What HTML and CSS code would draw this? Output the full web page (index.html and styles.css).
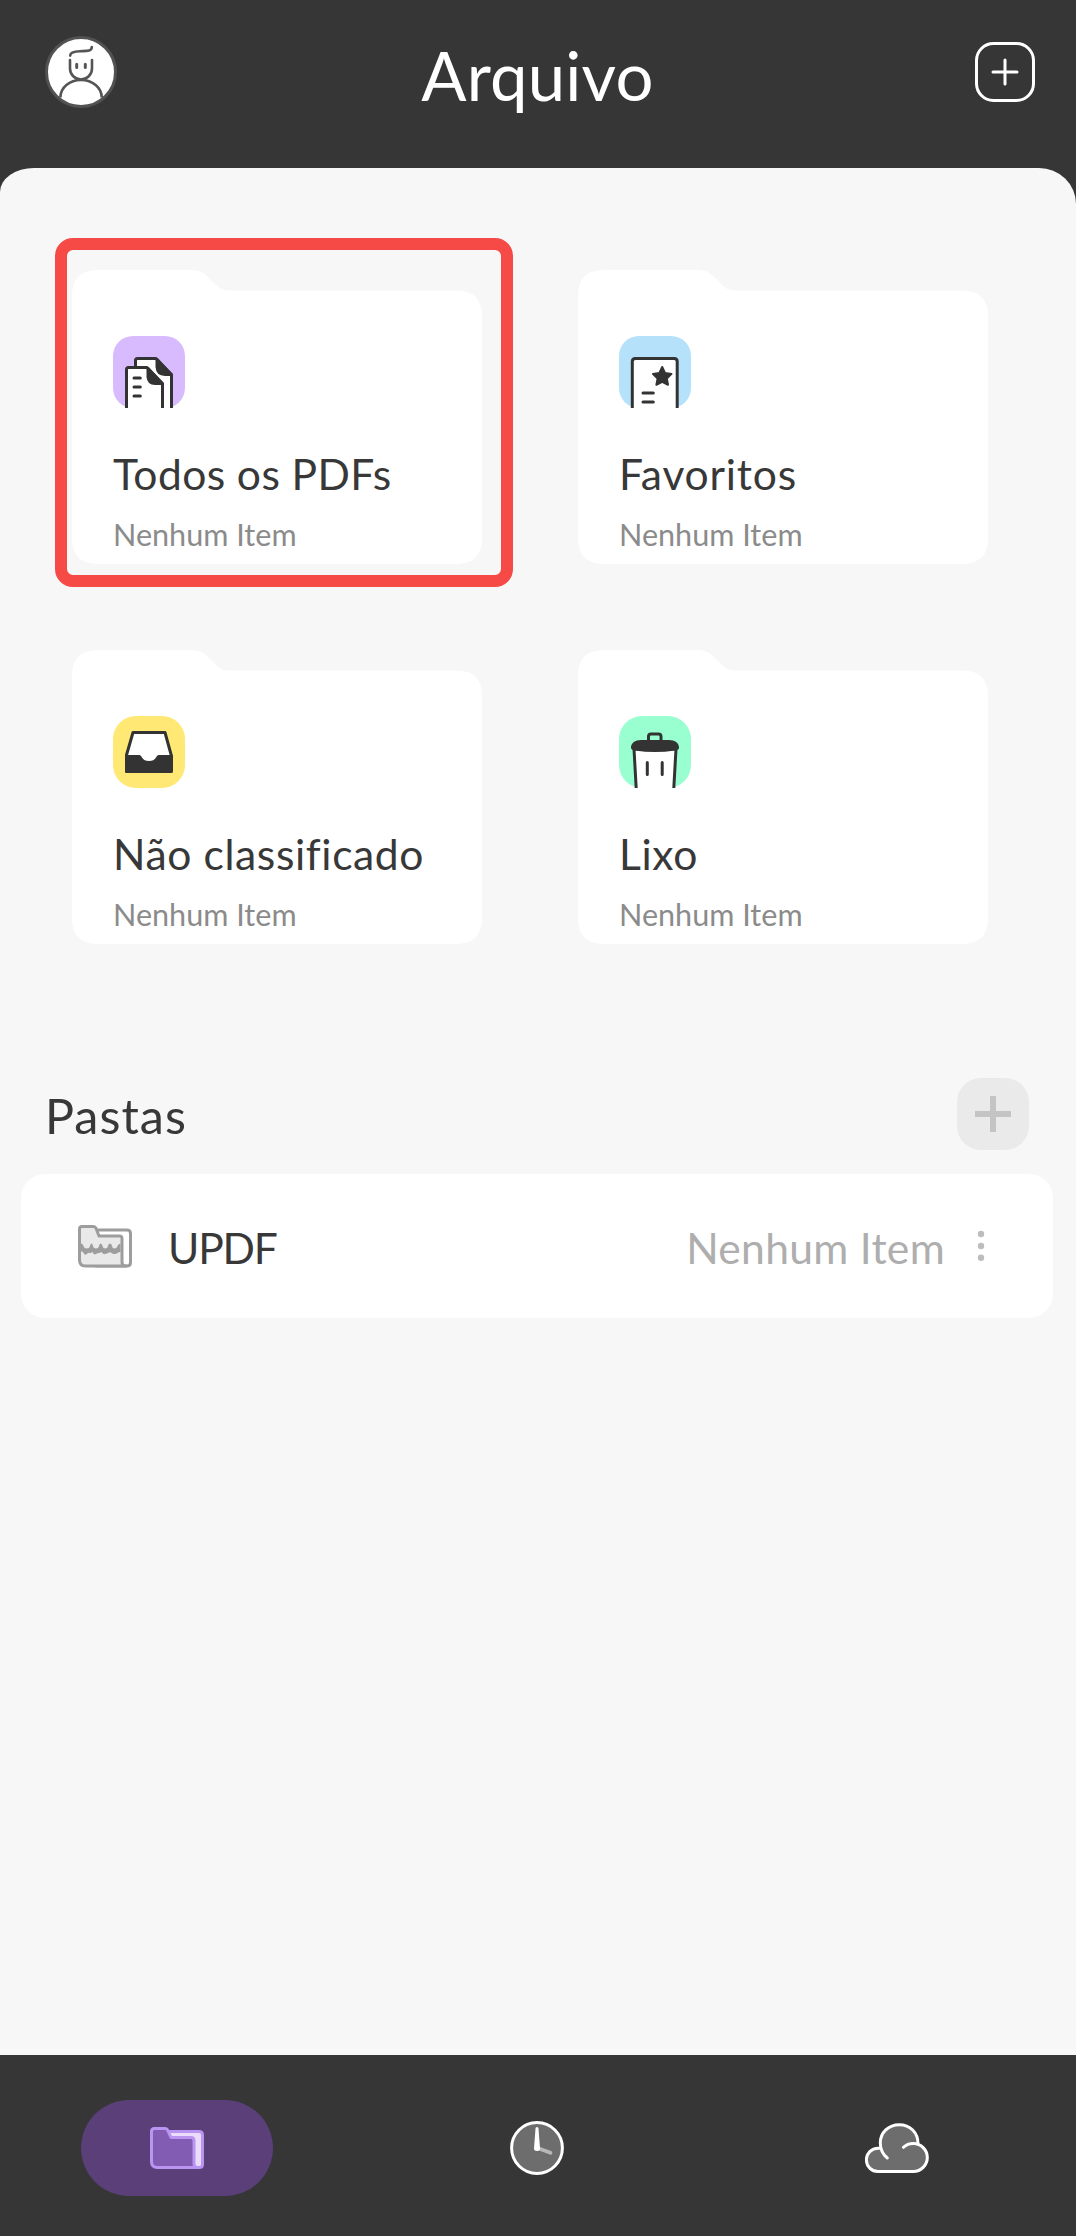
FILE: index.html
```
<!DOCTYPE html>
<html lang="pt">
<head>
<meta charset="utf-8">
<title>Arquivo</title>
<link rel="stylesheet" href="styles.css">
</head>
<body>
<div class="app">
  <header class="header">
    <svg class="avatar" viewBox="0 0 72 72">
      <circle cx="36" cy="36" r="34.5" fill="#fff" stroke="#525252" stroke-width="3"/>
      <g fill="none" stroke="#555" stroke-width="2.6" stroke-linecap="round">
        <path d="M25.2 19.6C25.2 16.4 29 15.4 35 15.2C41 15 46.8 15.8 46.8 11"/>
        <path d="M25 24V32.5A11 11 0 0 0 47 32.5V24"/>
        <path d="M31.7 28.3V31.5M40.3 28.3V31.5" stroke-width="3"/>
        <path d="M15.4 61.5C15.4 51.5 24.5 44 36 44S56.7 51.5 56.7 61.5" stroke-linecap="butt"/>
      </g>
    </svg>
    <h1 class="title">Arquivo</h1>
    <svg class="header-add" viewBox="0 0 60 60" fill="none" stroke="#fff" stroke-width="3" stroke-linecap="round">
      <rect x="1.5" y="1.5" width="57" height="57" rx="17"/>
      <path d="M30 18V42M18 30H42"/>
    </svg>
  </header>

  <main class="sheet">
    <ul class="cards">
      <li class="cell cell-selected">
        <div class="card">
          <svg class="card-icon" viewBox="0 0 72 72">
            <rect width="72" height="72" rx="20" fill="#d8bbff"/>
            <g stroke="#333" stroke-width="3" stroke-linejoin="round">
              <path d="M22.500 74V24.500Q22.500 22.500 24.500 22.500H43L58.500 38.500V74" fill="#fff"/>
              <path d="M44 23.500V31Q44.500 38.500 52 38.500H58Z" fill="#333"/>
              <path d="M13.500 74V33.500Q13.500 31.500 15.500 31.500H34L49.500 47.500V74" fill="#fff"/>
              <path d="M35 32.500V41Q35.500 47.500 42 47.500H49Z" fill="#333"/>
              <path d="M21 42H27.300M21 51H27.300M21 60H27.300" stroke-linecap="round"/>
            </g>
          </svg>
          <h2 class="card-name card-name-all">Todos os PDFs</h2>
          <p class="card-count">Nenhum Item</p>
        </div>
      </li>
      <li class="cell">
        <div class="card">
          <svg class="card-icon" viewBox="0 0 72 72">
            <rect width="72" height="72" rx="20" fill="#b6e1fa"/>
            <path d="M13.300 74V25.500Q13.300 22.500 16.300 22.500H55.200Q58.200 22.500 58.200 25.500V74" fill="#fff" stroke="#333" stroke-width="3"/>
            <path d="M43.200 31L46 37L52.500 37.900L47.800 42.500L49 48.800L43.200 45.800L37.400 48.800L38.600 42.500L33.900 37.900L40.400 37Z" fill="#333" stroke="#333" stroke-width="2" stroke-linejoin="round"/>
            <path d="M24 57H34.300M24 66H34.300" stroke="#333" stroke-width="3" stroke-linecap="round"/>
          </svg>
          <h2 class="card-name card-name-favorites">Favoritos</h2>
          <p class="card-count">Nenhum Item</p>
        </div>
      </li>
      <li class="cell">
        <div class="card">
          <svg class="card-icon" viewBox="0 0 72 72">
            <rect width="72" height="72" rx="23" fill="#ffe873"/>
            <path d="M20 16.500H52L58.200 39V55.500H13.500V39Z" fill="#fff" stroke="#333" stroke-width="3" stroke-linejoin="round"/>
            <path d="M12 39H26.500Q28 39 29 41.500Q31 45 36 45T43 41.500Q44 39 45.500 39H60V55Q60 57 58 57H14Q12 57 12 55Z" fill="#333"/>
          </svg>
          <h2 class="card-name">Não classificado</h2>
          <p class="card-count">Nenhum Item</p>
        </div>
      </li>
      <li class="cell">
        <div class="card">
          <svg class="card-icon" viewBox="0 0 72 72">
            <rect width="72" height="72" rx="23" fill="#99ffd0"/>
            <path d="M15 33L17.300 74H54.700L57 33Z" fill="#fff" stroke="#333" stroke-width="3"/>
            <path d="M29.500 26V20.500Q29.500 18 32 18H39.500Q42 18 42 20.500V26" fill="none" stroke="#333" stroke-width="3"/>
            <path d="M12 31.500C12 27 16 24 22 24H50C56 24 60 27 60 31.500Q60 34 56 34.500Q36 37.500 16 34.500Q12 34 12 31.500Z" fill="#333"/>
            <path d="M28.300 46.500V58.500M43.200 46.500V58.500" stroke="#333" stroke-width="3" stroke-linecap="round"/>
          </svg>
          <h2 class="card-name">Lixo</h2>
          <p class="card-count">Nenhum Item</p>
        </div>
      </li>
    </ul>

    <div class="section-head">
      <h2 class="section-title">Pastas</h2>
      <div class="add-folder">
        <svg class="add-folder-icon" viewBox="0 0 36 36"><path d="M18 0V36M0 18H36" stroke="#c4c4c4" stroke-width="6"/></svg>
      </div>
    </div>

    <div class="folder-row">
      <svg class="folder-icon" viewBox="0 0 54 43">
        <g stroke="#9d9d9d" stroke-width="3" stroke-linejoin="round">
          <path d="M18 5H49Q52.500 5 52.500 8.500V37.500Q52.500 41 49 41H18Z" fill="#fff"/>
          <path d="M1.500 4Q1.500 1.500 4 1.500H15.500Q17.300 1.500 18 3.300L21 11H41.500Q44 11 44 13.500V37Q44 41 48 41H7.500Q1.500 41 1.500 35Z" fill="#e9e9e9"/>
        </g>
        <path d="M3 18.500Q5 18.500 5.500 21T8.800 23.500T12 21T13.500 18.500T15 21T18 23.500T21 21T22.700 18.500T24.500 21T27.300 23.500T30 21T32 18.500T34 21T36.500 23.500T39.500 21T42.500 18.500V27Q40.500 27 39.500 28T36.500 29T33.500 28T32 27.300T30.300 28T27.300 29T24.300 28T22.700 27.300T21 28T18 29T15 28T13.500 27.300T12 28T8.800 29T5.500 28T3 27Z" fill="#9d9d9d"/>
      </svg>
      <span class="folder-name">UPDF</span>
      <span class="folder-count">Nenhum Item</span>
      <svg class="more" viewBox="0 0 6 30" fill="#bdbdbd"><circle cx="3" cy="3" r="3.200"/><circle cx="3" cy="15" r="3.200"/><circle cx="3" cy="26.700" r="3.200"/></svg>
    </div>
  </main>

  <nav class="tabs">
    <div class="tab tab-active">
      <svg class="folder-icon" viewBox="0 0 54 43">
        <g stroke="#b994f0" stroke-width="3" stroke-linejoin="round">
          <path d="M18 4.500H49Q52.500 4.500 52.500 8V37.500Q52.500 40.500 49 40.500H18Z" fill="#ecdcfc"/>
          <path d="M1.500 4.500Q1.500 1.500 4.500 1.500H15Q17 1.500 17.800 3.500L21 10.500H41Q44 10.500 44 13.500V37Q44 40.500 47.500 40.500H7.500Q1.500 40.500 1.500 34.500Z" fill="#825bb2"/>
        </g>
      </svg>
    </div>
    <div class="tab">
      <svg class="clock" viewBox="0 0 54 54">
        <circle cx="27" cy="27" r="25.400" fill="#6d6d6d" stroke="#fff" stroke-width="3"/>
        <path d="M27.500 27L40.500 31.800" stroke="#b8b8b8" stroke-width="3.600" stroke-linecap="round"/>
        <path d="M25.500 7.500Q25.500 6 27 6T28.500 7.500L30 27.500Q30 30 27 30T24 27.500Z" fill="#fff"/>
      </svg>
    </div>
    <div class="tab">
      <svg class="cloud" viewBox="0 0 64 50">
        <path d="M15 25.300H13A11.600 11.600 0 0 0 13 48.500H48.300A14 14 0 0 0 53 21C53 9 45 1.500 34.300 1.500S15 9.500 15 20Z" fill="#6d6d6d"/>
        <g fill="none" stroke="#fff" stroke-width="3" stroke-linecap="round">
          <path d="M14.500 25.200H13A11.600 11.600 0 0 0 13 48.500H48.300A14 14 0 0 0 48.300 20.500C44.500 20.500 41 21.800 38.500 24.300"/>
          <path d="M53 20.500C53 9.500 45 1.700 34.300 1.700C23.500 1.700 15.300 9.500 15.300 20C15.300 26.500 18 31.500 22.300 35"/>
        </g>
      </svg>
    </div>
  </nav>
</div>
</body>
</html>
```
FILE: styles.css
```
*, *::after { box-sizing: border-box; margin: 0; padding: 0; }

body {
  background: #363636;
  color: #383838;
  font-family: Lato, "Noto Sans", sans-serif;
}

h1, h2 { font-weight: 400; }
svg { display: block; flex: none; }

.app {
  display: flex;
  flex-direction: column;
  width: 1076px;
  height: 2236px;
}

.header {
  display: flex;
  align-items: center;
  height: 168px;
  padding: 36px 41px 60px 45px;
}
.avatar { width: 72px; height: 72px; }
.title {
  flex: 1;
  padding: 6px 17px 0 0;
  color: #fff;
  font-size: 67px;
  line-height: 80px;
  letter-spacing: 0.2px;
  text-align: center;
}
.header-add { width: 60px; height: 60px; }

.sheet {
  flex: 1;
  padding: 102px 23px 0 21px;
  background: #f7f7f7;
  border-radius: 34px 37px 0 0 / 24px 36px 0 0;
}

.cards {
  display: grid;
  grid-template-columns: 410px 410px;
  gap: 86px 96px;
  padding-left: 51px;
  list-style: none;
}
.cell { position: relative; }
.cell-selected::after {
  content: "";
  position: absolute;
  left: -17px;
  top: -32px;
  width: 458px;
  height: 349px;
  border: 12px solid #f54a45;
  border-radius: 18px;
}
.card {
  height: 294px;
  padding: 66px 0 0 41px;
  background: #fff;
  clip-path: path("M0 26Q0 0 26 0H120Q130 0 136 7L144 15Q149 20.500 157 20.500H384Q410 20.500 410 46V268Q410 294 384 294H26Q0 294 0 268Z");
}
.card-icon { width: 72px; height: 72px; }
.card-name {
  margin-top: 36px;
  font-size: 42.6px;
  line-height: 60px;
  letter-spacing: 0.6px;
  white-space: nowrap;
}
.card-name-all { letter-spacing: 0.4px; }
.card-name-favorites { letter-spacing: 0.8px; }
.card-count {
  margin-top: 11px;
  color: #8b8b8b;
  font-size: 30.6px;
  line-height: 40px;
}

.section-head {
  display: flex;
  justify-content: space-between;
  align-items: center;
  margin-top: 134px;
  padding: 0 24px;
}
.section-title {
  padding-top: 2px;
  font-size: 48.4px;
  line-height: 70px;
  letter-spacing: 1.05px;
}
.add-folder {
  display: grid;
  place-items: center;
  width: 72px;
  height: 72px;
  background: #eaeaea;
  border-radius: 24px;
}
.add-folder-icon { width: 36px; height: 36px; }

.folder-row {
  display: flex;
  align-items: center;
  height: 144px;
  margin-top: 24px;
  padding: 0 69px 0 57px;
  background: #fff;
  border-radius: 24px;
}
.folder-icon { width: 54px; height: 43px; }
.folder-name,
.folder-count {
  padding-top: 4px;
  font-size: 42.6px;
  line-height: 60px;
}
.folder-name {
  margin-left: 36px;
  letter-spacing: -1.2px;
}
.folder-count {
  margin: 0 33px 0 auto;
  color: #aeaeae;
  letter-spacing: 0.3px;
}
.more { width: 6px; height: 30px; overflow: visible; }

.tabs {
  display: flex;
  justify-content: space-between;
  height: 181px;
  padding: 45px 83px 0 81px;
  background: #363636;
}
.tab {
  display: grid;
  place-items: center;
  width: 192px;
  height: 96px;
}
.tab-active {
  background: #5b3f79;
  border-radius: 48px;
}
.clock { width: 54px; height: 54px; }
.cloud { width: 64px; height: 50px; }
```
